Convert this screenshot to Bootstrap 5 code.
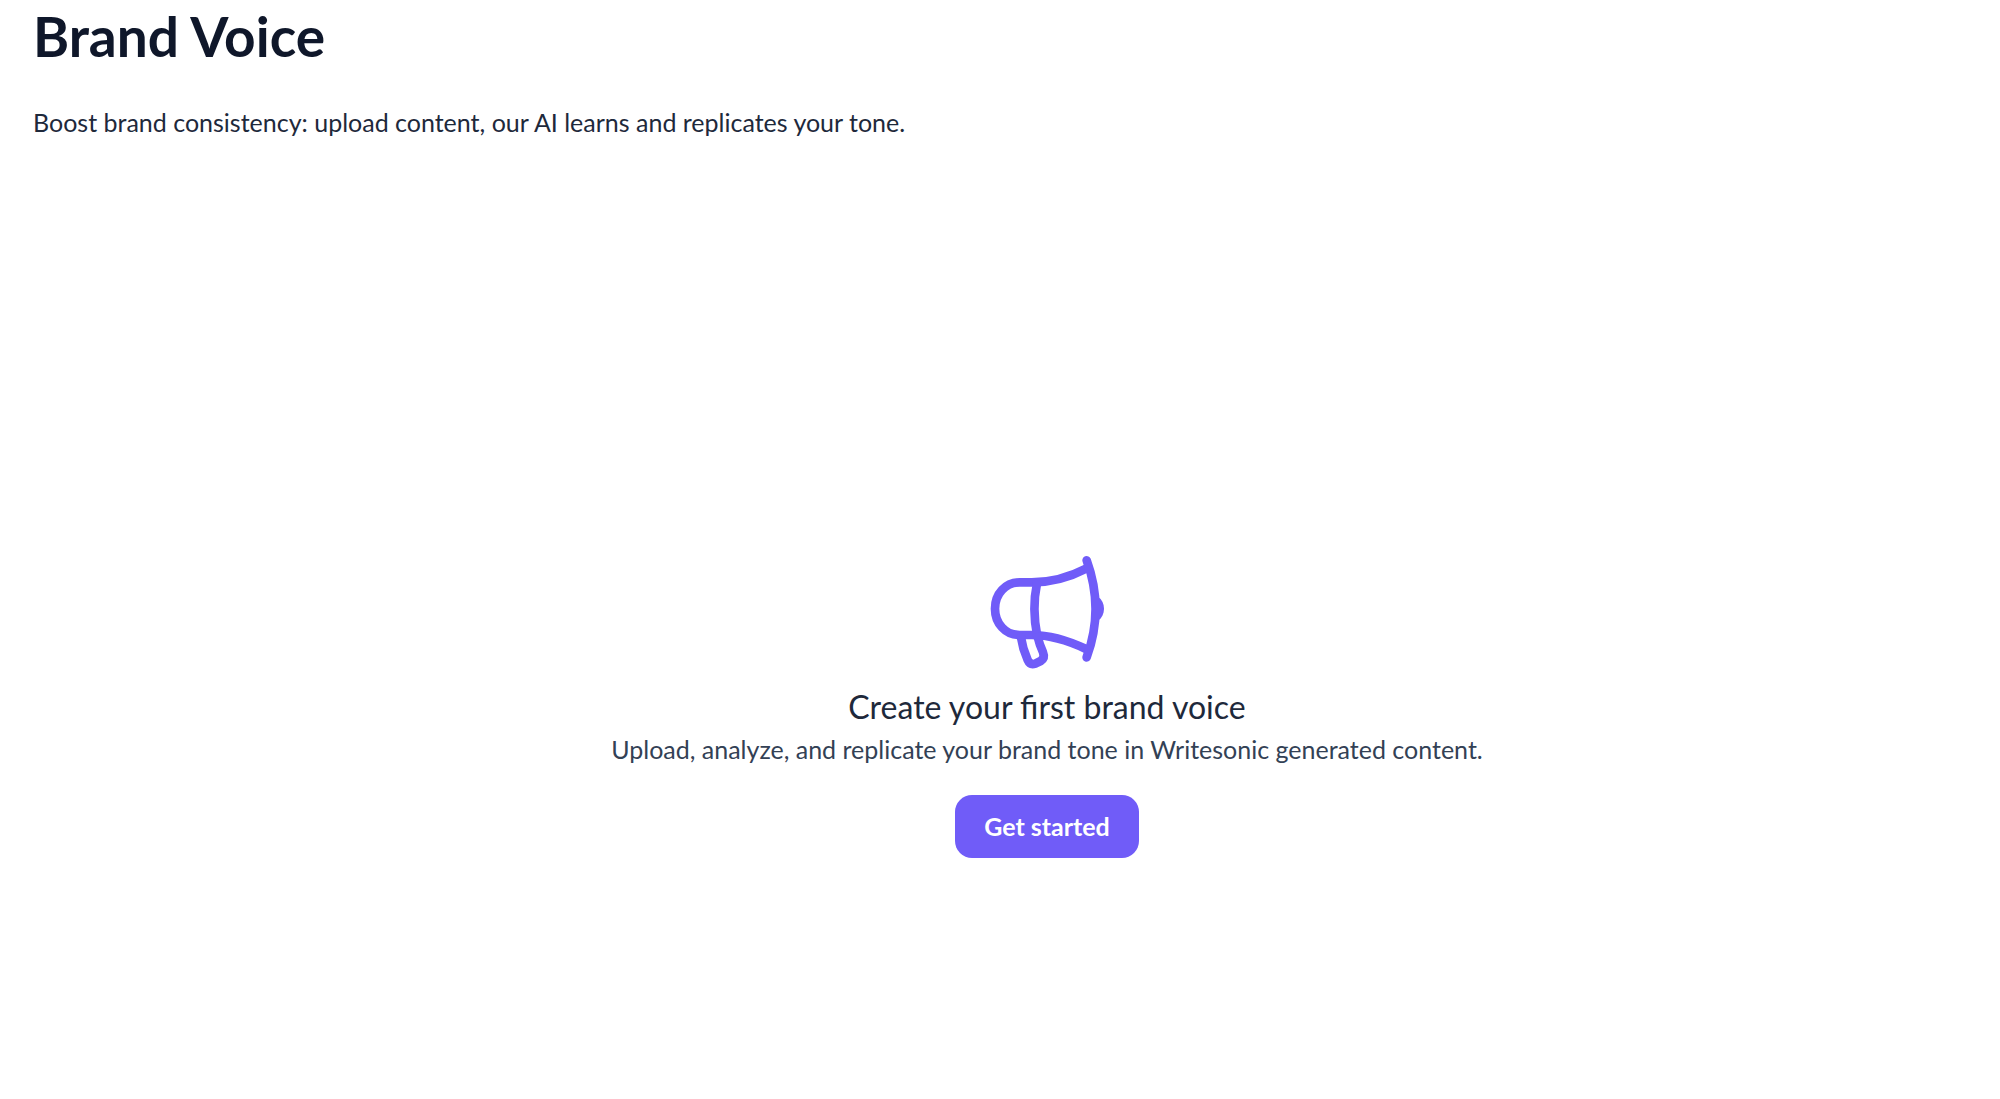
<!DOCTYPE html>
<html lang="en">
<head>
<meta charset="utf-8">
<meta name="viewport" content="width=device-width, initial-scale=1">
<title>Brand Voice</title>
<link href="https://cdn.jsdelivr.net/npm/bootstrap@5.3.0/dist/css/bootstrap.min.css" rel="stylesheet">
<style>
body { font-family: Lato, "Open Sans", sans-serif; color: #1e293b; font-size: 25px; line-height: 36px; }
.page-main { padding: 4px 33px 0; min-height: 100vh; }
.page-title { font-size: 55px; line-height: 64px; font-weight: 700; color: #0f172a; margin-bottom: 36px; }
.empty-state { padding: 172px 0 0 94px; margin-right: -33px; padding-right: 33px; }
.empty-title { font-size: 32px; line-height: 40px; font-weight: 400; margin-top: 13px; }
.empty-text { color: #334155; }
.megaphone { width: 120px; height: 120px; }
.start-btn { --bs-btn-color: #fff; --bs-btn-bg: #705cf8; --bs-btn-border-color: #705cf8; --bs-btn-hover-color: #fff; --bs-btn-hover-bg: #5e49ee; --bs-btn-active-bg: #5e49ee; --bs-btn-active-color: #fff; --bs-btn-font-size: 25px; --bs-btn-font-weight: 700; --bs-btn-line-height: 37px; --bs-btn-padding-x: 29px; --bs-btn-padding-y: 13px; --bs-btn-border-width: 0; --bs-btn-border-radius: 17px; line-height: 37px; }
</style>
</head>
<body class="bg-white">
<main class="page-main d-flex flex-column">
  <header>
    <h1 class="page-title">Brand Voice</h1>
    <p class="mb-0">Boost brand consistency: upload content, our AI learns and replicates your tone.</p>
  </header>
  <section class="empty-state flex-grow-1 d-flex flex-column align-items-center justify-content-center text-center">
    <svg class="megaphone" viewBox="51 40 360 360" fill="none" stroke="#705cf8" stroke-width="26" stroke-linecap="round" stroke-linejoin="round" aria-hidden="true">
      <path d="M350 83C300 109 245 125 185 125H149C106 125 75 160 75 204S106 283 149 283H185C240 283 295 300 348 325"/>
      <path d="M350 59C385 155 385 255 350 350"/>
      <path d="M201 128Q185 204 202 288"/>
      <path d="M153 290C157 318 165 340 173 358Q180 374 196 369L212 361Q226 352 219 335Q208 310 203 288"/>
      <path d="M384 168C408 183 408 225 384 240Z" fill="#705cf8" stroke="none"/>
    </svg>
    <h2 class="empty-title mb-0">Create your first brand voice</h2>
    <p class="empty-text mt-1 mb-4">Upload, analyze, and replicate your brand tone in Writesonic generated content.</p>
    <button type="button" class="btn start-btn mt-1">Get started</button>
  </section>
</main>
<script src="https://cdn.jsdelivr.net/npm/bootstrap@5.3.0/dist/js/bootstrap.bundle.min.js"></script>
</body>
</html>
